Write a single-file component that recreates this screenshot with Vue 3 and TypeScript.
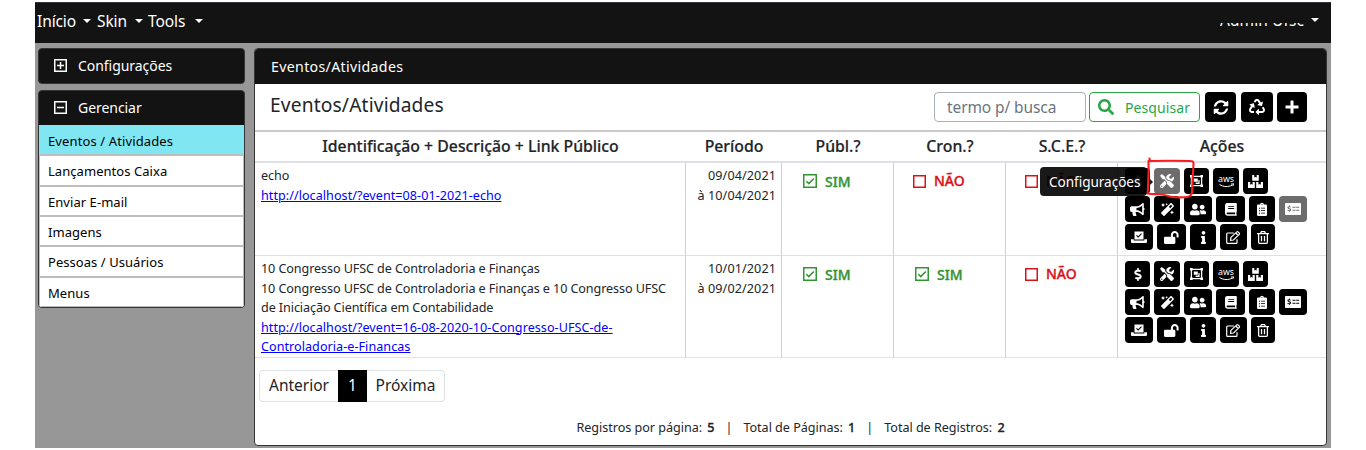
<script setup lang="ts">
interface Shape { box: string; w: number; h: number; d?: string; line?: string; sw?: number; label?: string }
interface Action { icon: string; w: number }
interface EventRow {
  cls: string
  lines: string[]
  link: string[]
  from: string
  to: string
  flags: boolean[]
}

const icons: Record<string, Shape> = {
  dollar: { box: '0 0 288 512', w: 8, h: 13, d: 'M209.2 233.4l-108-31.6C88.7 198.2 80 186.5 80 173.5c0-16.3 13.2-29.5 29.5-29.5h66.3c12.2 0 24.2 3.7 34.2 10.5 6.1 4.1 14.3 3.1 19.5-2l34.8-34c7.1-6.9 6.1-18.4-1.8-24.5C238 74.8 207.4 64.1 176 64V16c0-8.8-7.2-16-16-16h-32c-8.8 0-16 7.2-16 16v48h-2.5C45.8 64-5.4 118.7.5 183.6c4.2 46.1 39.4 83.6 83.8 96.6l102.5 30c12.5 3.7 21.2 15.3 21.2 28.3 0 16.3-13.2 29.5-29.5 29.5h-66.3C100 368 88 364.3 78 357.5c-6.1-4.1-14.3-3.1-19.5 2l-34.8 34c-7.1 6.9-6.1 18.4 1.8 24.5 24.5 19.2 55.1 29.9 86.5 30v48c0 8.8 7.2 16 16 16h32c8.8 0 16-7.2 16-16v-48.2c46.6-.9 90.3-28.6 105.7-72.7 21.5-61.6-14.6-124.8-72.5-141.7z' },
  tools: { box: '0 0 512 512', w: 14, h: 14, d: 'M501.1 395.7L384 278.6c-23.1-23.1-57.6-27.6-85.4-13.9L192 158.1V96L64 0 0 64l96 128h62.1l106.6 106.6c-13.6 27.8-9.2 62.3 13.9 85.4l117.1 117.1c14.6 14.6 38.2 14.6 52.7 0l52.7-52.7c14.5-14.6 14.5-38.2 0-52.7zM331.7 225c28.3 0 54.9 11 74.9 31l19.4 19.4c15.8-6.9 30.8-16.5 43.8-29.5 37.1-37.1 49.7-89.3 37.9-136.7-2.2-9-13.5-12.1-20.1-5.5l-74.4 74.4-67.9-11.3L334 98.9l74.4-74.4c6.6-6.6 3.4-17.9-5.7-20.2-47.4-11.7-99.6.9-136.6 37.9-28.5 28.5-41.9 66.1-41.2 103.6l82.1 82.1c8.1-1.9 16.5-2.9 24.7-2.9zm-103.9 82l-56.7-56.7L18.7 402.8c-25 25-25 65.5 0 90.5s65.5 25 90.5 0l123.6-123.6c-7.6-19.9-9.9-41.6-5-62.7zM64 472c-13.2 0-24-10.8-24-24 0-13.3 10.7-24 24-24s24 10.7 24 24c0 13.2-10.7 24-24 24z' },
  group: { box: '0 0 13 12', w: 13, h: 12, d: 'M0 0h2.6v2.6H0zM10.400 0H13v2.600h-2.600zM0 9.400h2.600V12H0zM10.400 9.400H13V12h-2.600zM3.800 3.400h4v3.400h-4zM8.400 5h1.200v4H5.600V7.500h2.800z', line: 'M1.400 1.300h10.200v9.400H1.400z', sw: 1.300 },
  aws: { box: '0 0 18 13', w: 18, h: 13, label: 'aws', line: 'M2.500 9.500c4 2.600 9 2.600 12.800.6M14 9.100l2.600-.3-.8 2.300', sw: 1 },
  boxes: { box: '0 0 15 13', w: 15, h: 13, d: 'M4.2 0h2.1v2.6l1.2-.6 1.2.6V0h2.1v5.7H4.2zM0 7h2.2v2.7l1.2-.6 1.2.6V7h2.2v6H0zM8.2 7h2.2v2.7l1.2-.6 1.2.6V7H15v6H8.2z' },
  horn: { box: '0 0 576 512', w: 14.6, h: 13, d: 'M576 240c0-23.63-12.95-44.04-32-55.12V32.01C544 23.26 537.02 0 512 0c-7.12 0-14.19 2.38-19.98 7.02l-85.03 68.03C364.28 109.19 310.66 128 256 128H64c-35.35 0-64 28.65-64 64v96c0 35.35 28.65 64 64 64h33.7c-1.39 10.48-2.18 21.14-2.18 32 0 39.77 9.26 77.35 25.56 110.94 5.19 10.69 16.52 17.06 28.4 17.06h74.28c26.05 0 41.69-29.84 25.9-50.56-16.4-21.52-26.15-48.36-26.15-77.44 0-11.11 1.62-21.79 4.41-32H256c54.66 0 108.28 18.81 150.98 52.95l85.03 68.03a32.023 32.023 0 0 0 19.98 7.02c24.92 0 32-22.78 32-32V295.13C563.05 284.04 576 263.63 576 240zm-96 141.42l-33.05-26.44C392.95 311.78 325.12 288 256 288v-96c69.12 0 136.95-23.78 190.95-66.98L480 98.58v282.84z' },
  magic: { box: '0 0 512 512', w: 13, h: 13, d: 'M224 96l16-32 32-16-32-16-16-32-16 32-32 16 32 16 16 32zM80 160l26.66-53.33L160 80l-53.34-26.67L80 0 53.34 53.33 0 80l53.34 26.67L80 160zm352 128l-26.66 53.33L352 368l53.34 26.67L432 448l26.66-53.33L512 368l-53.34-26.67L432 288zm70.62-193.77L417.77 9.38C411.53 3.12 403.34 0 395.15 0c-8.19 0-16.38 3.12-22.63 9.38L9.38 372.52c-12.5 12.5-12.5 32.76 0 45.25l84.85 84.85c6.25 6.25 14.44 9.37 22.62 9.37 8.19 0 16.38-3.12 22.63-9.37l363.14-363.15c12.5-12.48 12.5-32.75 0-45.24zM359.45 203.46l-50.91-50.91 86.6-86.6 50.91 50.91-86.6 86.6z' },
  users: { box: '0 0 640 512', w: 16.2, h: 13, d: 'M192 256c61.9 0 112-50.1 112-112S253.9 32 192 32 80 82.1 80 144s50.1 112 112 112zm76.8 32h-8.3c-20.8 10-43.9 16-68.5 16s-47.6-6-68.5-16h-8.3C51.6 288 0 339.6 0 403.2V432c0 26.5 21.5 48 48 48h288c26.5 0 48-21.5 48-48v-28.8c0-63.6-51.6-115.2-115.2-115.2zM480 256c53 0 96-43 96-96s-43-96-96-96-96 43-96 96 43 96 96 96zm48 32h-3.8c-13.9 4.8-28.6 8-44.2 8s-30.3-3.2-44.2-8H432c-20.4 0-39.2 5.9-55.7 15.4 24.4 26.3 39.7 61.2 39.7 99.8v38.4c0 2.2-.5 4.3-.6 6.4H592c26.5 0 48-21.5 48-48 0-61.9-50.1-112-112-112z' },
  book: { box: '0 0 12 13', w: 12, h: 13, d: 'M2.4 0H11q.8 0 .8.8v7.8q0 .4-.4.7v1.9q.4.2.4.6v.4q0 .5-.6.5H2.4Q0 12.7 0 10.3V2.4Q0 0 2.4 0zM3.2 3.2v.9h6v-.9zM3.2 5v.9h6V5zM2.4 9.6q-.8 0-.8.8t.8.8h7.7V9.6z' },
  clip: { box: '0 0 10 13', w: 10, h: 13, d: 'M1.2 1.6h1.9a1.9 1.9 0 0 1 3.8 0h1.9Q10 1.6 10 2.8v9Q10 13 8.8 13H1.2Q0 13 0 11.8v-9Q0 1.6 1.2 1.6zM4.5 1.2v.8h1v-.8zM2 4.8v1h1v-1zM4 4.8v.8h4v-.8zM2 7.2v1h1v-1zM4 7.2V8h4v-.8zM2 9.7v1h1v-1zM4 9.7v.8h4v-.8z' },
  check: { box: '0 0 16 12', w: 16, h: 12, d: 'M.8 0h14.4q.8 0 .8.8v10.4q0 .8-.8.8H.8q-.8 0-.8-.8V.8Q0 0 .8 0zM7.500 3.700v1h3v-1zM11.200 3.700v1H14.200v-1zM7.500 6.800v.9h3v-.9zM11.200 6.800v.9h3v-.9zM4 2.600v.7Q2.300 3.600 2.400 4.800q.1 1 1.800 1.400.8.2.7.7-.2.5-1 .4L2.700 7l-.4.8 1.700.5V9h.7v-.8q1.400-.3 1.400-1.500-.1-1-1.600-1.400-1.100-.2-1-.6.2-.5 1-.4l1 .3.300-.8-1-.3v-.9z' },
  vote: { box: '0 0 16 13', w: 16, h: 13, d: 'M3.5.6h9v8h-9zM7.2 6.8l3.7-3.7-.8-.8-2.9 2.900-1.300-1.300-.8.8zM0 8.200h2.700v1.300h10.600V8.200H16V11q0 1-1 1H1q-1 0-1-1z' },
  unlock: { box: '0 0 576 512', w: 14.6, h: 13, d: 'M423.5 0C339.5.3 272 69.5 272 153.5V224H48c-26.5 0-48 21.5-48 48v192c0 26.5 21.5 48 48 48h352c26.5 0 48-21.5 48-48V272c0-26.5-21.5-48-48-48h-48v-71.1c0-39.6 31.7-72.5 71.3-72.9 40-.4 72.7 32.1 72.7 72v80c0 13.3 10.7 24 24 24h32c13.3 0 24-10.7 24-24v-80C576 68 507.5-.3 423.5 0z' },
  info: { box: '0 0 192 512', w: 5, h: 13, d: 'M20 424.229h20V279.771H20c-11.046 0-20-8.954-20-20V212c0-11.046 8.954-20 20-20h112c11.046 0 20 8.954 20 20v212.229h20c11.046 0 20 8.954 20 20V492c0 11.046-8.954 20-20 20H20c-11.046 0-20-8.954-20-20v-47.771c0-11.046 8.954-20 20-20zM96 0C56.235 0 24 32.235 24 72s32.235 72 72 72 72-32.235 72-72S135.764 0 96 0z' },
  edit: { box: '0 0 15 13', w: 15, h: 13, line: 'M7.8 2H1.6Q.7 2 .7 2.9v8.500q0 .9.9.9h8.500q.9 0 .9-.9V8.200M4.900 6.400L10.800.9q.6-.5 1.200 0l1.300 1.300q.5.6 0 1.200L7.500 9l-2.900.4zM9.800 2l2.500 2.500', sw: 1.2 },
  trash: { box: '0 0 12 13', w: 12, h: 13, line: 'M0 2.6h12M3.6 2.4L4.4.7h3.200l.8 1.700M1.600 2.800v8.500q0 1 1 1h6.800q1 0 1-1V2.800M4.500 5v5.300M7.500 5v5.300', sw: 1.3 },
  sync: { box: '0 0 512 512', w: 16, h: 15, d: 'M370.72 133.28C339.458 104.008 298.888 87.962 255.848 88c-77.458.068-144.328 53.178-162.791 126.85-1.344 5.363-6.122 9.15-11.651 9.15H24.103c-7.498 0-13.194-6.807-11.807-14.176C33.933 94.924 134.813 8 256 8c66.448 0 126.791 26.136 171.315 68.685L463.03 40.97C478.149 25.851 504 36.559 504 57.941V192c0 13.255-10.745 24-24 24H345.941c-21.382 0-32.09-25.851-16.971-40.971l41.75-41.749zM32 296h134.059c21.382 0 32.09 25.851 16.971 40.971l-41.75 41.75c31.262 29.273 71.835 45.319 114.876 45.28 77.418-.07 144.315-53.144 162.787-126.849 1.344-5.363 6.122-9.15 11.651-9.15h57.304c7.498 0 13.194 6.807 11.807 14.176C478.067 417.076 377.187 504 256 504c-66.448 0-126.791-26.136-171.315-68.685L48.97 471.03C33.851 486.149 8 475.441 8 454.059V320c0-13.255 10.745-24 24-24z' },
  recycle: { box: '0 0 512 512', w: 16, h: 16, d: 'M184.561 261.903c3.232 13.997-12.123 24.635-24.068 17.168l-40.736-25.455-50.867 81.402C55.606 356.273 70.96 384 96.012 384H148c6.627 0 12 5.373 12 12v40c0 6.627-5.373 12-12 12H96.115c-75.334 0-121.302-83.048-81.408-146.88l50.822-81.388-40.725-25.448c-12.081-7.547-8.966-25.961 4.879-29.158l110.237-25.45c8.611-1.988 17.201 3.381 19.189 11.99l25.452 110.237zm98.561-182.915l41.289 66.076-40.74 25.457c-12.051 7.528-9 25.953 4.879 29.158l110.237 25.45c8.672 1.999 17.215-3.438 19.189-11.99l25.45-110.237c3.197-13.844-11.99-24.719-24.068-17.168l-40.687 25.424-41.263-66.082c-37.521-60.033-125.209-60.171-162.816 0l-17.963 28.766c-3.51 5.62-1.8 13.021 3.82 16.533l33.919 21.195c5.62 3.512 13.024 1.803 16.536-3.817l17.961-28.743c12.712-20.341 41.973-19.676 54.257-.022zM497.288 301.12l-27.515-44.065c-3.511-5.623-10.916-7.334-16.538-3.821l-33.861 21.159c-5.62 3.512-7.33 10.915-3.818 16.536l27.564 44.112c13.257 21.211-2.057 48.96-27.136 48.96H320V336.02c0-14.213-17.242-21.383-27.313-11.313l-80 79.981c-6.249 6.248-6.249 16.379 0 22.627l80 79.989C302.689 517.308 320 510.3 320 495.989V448h95.88c75.274 0 121.335-82.997 81.408-146.88z' },
  plus: { box: '0 0 14 14', w: 14, h: 14, d: 'M6 .5h2q.5 0 .5.5v4.500H13q.5 0 .5.500v2q0 .5-.5.500H8.500V13q0 .5-.5.500H6q-.5 0-.5-.5V8.500H1Q.5 8.500.5 8V6q0-.5.500-.5h4.500V1q0-.5.500-.5z' },
  search: { box: '0 0 512 512', w: 16, h: 16, d: 'M505 442.7L405.3 343c-4.5-4.5-10.6-7-17-7H372c27.6-35.3 44-79.7 44-128C416 93.1 322.9 0 208 0S0 93.1 0 208s93.1 208 208 208c48.3 0 92.7-16.4 128-44v16.3c0 6.4 2.5 12.5 7 17l99.7 99.7c9.4 9.4 24.6 9.4 33.9 0l28.3-28.3c9.4-9.4 9.4-24.6.1-34zM208 336c-70.7 0-128-57.2-128-128 0-70.7 57.2-128 128-128 70.7 0 128 57.2 128 128 0 70.7-57.2 128-128 128z' },
}

const actionRows: Action[][] = [
  [{ icon: 'dollar', w: 25 }, { icon: 'tools', w: 26 }, { icon: 'group', w: 25 }, { icon: 'aws', w: 26 }, { icon: 'boxes', w: 25 }],
  [{ icon: 'horn', w: 25 }, { icon: 'magic', w: 26 }, { icon: 'users', w: 28 }, { icon: 'book', w: 29 }, { icon: 'clip', w: 26 }, { icon: 'check', w: 28 }],
  [{ icon: 'vote', w: 28 }, { icon: 'unlock', w: 29 }, { icon: 'info', w: 26 }, { icon: 'edit', w: 27 }, { icon: 'trash', w: 24 }],
]

const toolbar = ['sync', 'recycle', 'plus']
const menus = ['Início', 'Skin', 'Tools']
const links = ['Eventos / Atividades', 'Lançamentos Caixa', 'Enviar E-mail', 'Imagens', 'Pessoas / Usuários', 'Menus']
const heads = ['Identificação + Descrição + Link Público', 'Período', 'Públ.?', 'Cron.?', 'S.C.E.?', 'Ações']

const rows: EventRow[] = [
  {
    cls: 'first',
    lines: ['echo'],
    link: ['http://localhost/?event=08-01-2021-echo'],
    from: '09/04/2021',
    to: 'à 10/04/2021',
    flags: [true, false, false],
  },
  {
    cls: 'second',
    lines: [
      '10 Congresso UFSC de Controladoria e Finanças',
      '10 Congresso UFSC de Controladoria e Finanças e 10 Congresso UFSC',
      'de Iniciação Científica em Contabilidade',
    ],
    link: ['http://localhost/?event=16-08-2020-10-Congresso-UFSC-de-', 'Controladoria-e-Financas'],
    from: '10/01/2021',
    to: 'à 09/02/2021',
    flags: [true, true, false],
  },
]

const isMuted = (row: number, icon: string) => row === 0 && (icon === 'tools' || icon === 'check')
</script>

<template>
  <div class="app">
    <nav class="nav">
      <span v-for="m in menus" :key="m" :class="['menu', 'm-' + m.length]">{{ m }}<i class="caret"></i></span>
      <span class="account"><span class="account-name"><span>Admin Ufsc</span></span><i class="caret"></i></span>
    </nav>

    <div class="body">
      <aside class="side">
        <section class="box">
          <header class="box-head">
            <svg width="13" height="13" viewBox="0 0 13 13"><path d="M.75.75h11.500v11.500H.75zM6.500 3v7M3 6.500h7" /></svg>
            <span>Configurações</span>
          </header>
        </section>
        <section class="box">
          <header class="box-head">
            <svg width="13" height="13" viewBox="0 0 13 13"><path d="M.75.75h11.500v11.500H.75zM3 6.500h7" /></svg>
            <span>Gerenciar</span>
          </header>
          <ul class="list">
            <li v-for="(l, i) in links" :key="l" :class="{ active: i === 0 }">{{ l }}</li>
          </ul>
        </section>
      </aside>

      <main class="main">
        <header class="main-head">Eventos/Atividades</header>
        <div class="bar">
          <h1>Eventos/Atividades</h1>
          <input class="field" type="text" placeholder="termo p/ busca" />
          <button class="search">
            <svg width="16" height="16" :viewBox="icons.search.box"><path :d="icons.search.d" /></svg>
            <span>Pesquisar</span>
          </button>
          <button v-for="t in toolbar" :key="t" :class="['tool', t]">
            <svg :width="icons[t].w" :height="icons[t].h" :viewBox="icons[t].box"><path :d="icons[t].d" /></svg>
          </button>
        </div>

        <table>
          <colgroup><col class="c1" /><col class="c2" /><col class="c3" /><col class="c3" /><col class="c3" /><col /></colgroup>
          <thead>
            <tr><th v-for="h in heads" :key="h"><span>{{ h }}</span></th></tr>
          </thead>
          <tbody>
            <tr v-for="(r, ri) in rows" :key="r.cls" :class="r.cls">
              <td class="desc">
                <div v-for="t in r.lines" :key="t">{{ t }}</div>
                <a v-for="t in r.link" :key="t">{{ t }}</a>
              </td>
              <td class="dates"><div>{{ r.from }}</div><div>{{ r.to }}</div></td>
              <td v-for="(f, fi) in r.flags" :key="fi" class="flag">
                <div :class="f ? 'yes' : 'no'">
                  <svg v-if="f" width="14" height="14" viewBox="0 0 14 14"><path d="M.75.75h12.500v12.500H.75zM3.300 7.200l2.500 2.400L10.800 4.500" /></svg>
                  <svg v-else width="13" height="13" viewBox="0 0 13 13"><path d="M.75.75h11.500v11.500H.75z" /></svg>
                  <span>{{ f ? 'SIM' : 'NÃO' }}</span>
                </div>
              </td>
              <td class="actions">
                <div v-for="(ar, ai) in actionRows" :key="ai" class="action-row">
                  <button v-for="a in ar" :key="a.icon" :class="{ muted: isMuted(ri, a.icon) }" :style="{ width: a.w + 'px' }">
                    <svg :width="icons[a.icon].w" :height="icons[a.icon].h" :viewBox="icons[a.icon].box">
                      <text v-if="icons[a.icon].label" x="1" y="6.500" textLength="16" lengthAdjust="spacingAndGlyphs">{{ icons[a.icon].label }}</text>
                      <path v-if="icons[a.icon].d" fill-rule="evenodd" :d="icons[a.icon].d" />
                      <path v-if="icons[a.icon].line" class="line" :d="icons[a.icon].line" :stroke-width="icons[a.icon].sw" />
                    </svg>
                  </button>
                </div>
                <template v-if="ri === 0">
                  <div class="tip">Configurações</div>
                  <svg class="marker" width="50" height="44" viewBox="0 0 50 44">
                    <path d="M4.500 1.500L5 4M3.500 5.500q0 3 .2 7-.5 12-1 24M2.500 36.500q6 1 11.500.5 6 1 11 2.500 8 1.500 17 .5 4-.5 5-4.500.5-14 1.500-28 .5-3.500-3-3.500-20-.5-42 0" />
                  </svg>
                </template>
              </td>
            </tr>
          </tbody>
        </table>

        <div class="pager"><span class="prev">Anterior</span><span class="current">1</span><span class="next">Próxima</span></div>
        <footer>
          <span>Registros por página: <b>5</b></span><i>|</i><span>Total de Páginas: <b>1</b></span><i>|</i><span>Total de Registros: <b>2</b></span>
        </footer>
      </main>
    </div>
  </div>
</template>

<style>
body { margin: 0; background: #fff; overflow: hidden; }
</style>

<style scoped>
* { box-sizing: border-box; }
.app { width: 1296px; height: 446px; margin: 2px 0 0 35px; background: #979797; font-family: "Noto Sans", sans-serif; color: #212529; overflow: hidden; }
.nav { height: 41px; background: #131313; border-top: 1px solid #34343c; display: flex; align-items: center; padding: 0 12px 4px 2px; color: #fff; font-size: 15.5px; letter-spacing: -0.1px; white-space: nowrap; }
.menu { display: flex; align-items: center; justify-content: space-between; width: 60px; padding-right: 6px; }
.menu.m-4 { width: 51px; padding-right: 5px; }
.menu.m-5 { width: 55px; padding-right: 0; }
.caret { width: 0; height: 0; border: 4px solid transparent; border-top-color: #fff; border-bottom: 0; }
.account { margin-left: auto; display: flex; align-items: center; gap: 7px; padding-bottom: 3px; letter-spacing: 0.1px; }
.account-name { display: flex; align-items: flex-end; height: 3px; overflow: hidden; margin-top: 9px; }
.account-name span { line-height: 12px; }
.body { display: flex; gap: 9px; padding: 5px 4px 0 3px; }
.side { width: 207px; display: flex; flex-direction: column; gap: 6px; }
.box { border: 1px solid #343434; border-radius: 4px; background: #131313; overflow: hidden; }
.box-head { height: 34px; display: flex; align-items: center; gap: 11px; padding: 0 0 2px 15px; color: #fff; font-size: 14px; letter-spacing: -0.05px; }
.box-head svg { fill: none; stroke: #fff; stroke-width: 1.5; }
.list { margin: 0; padding: 0; list-style: none; background: #bdbdbd; }
.list li { height: 30.33px; border: 1px solid #bdbdbd; background: #fff; color: #000; padding: 1px 0 0 8px; font-size: 13px; line-height: 28px; letter-spacing: 0.05px; }
.list li.active { background: #80e7f2; border-color: #80e7f2 #80e7f2 #bdbdbd; letter-spacing: 0.12px; }
.main { width: 1073px; height: 398px; border: 1px solid #343434; border-radius: 4px; background: #fff; overflow: hidden; }
.main-head { height: 35px; background: #131313; color: #fff; padding-left: 16px; font-size: 14.2px; line-height: 35px; letter-spacing: 0.32px; }
.bar { height: 48px; border-bottom: 2px solid #cdc9cb; display: flex; align-items: center; padding: 0 19px 0 15px; }
h1 { margin: 0 auto 5px 0; font-size: 19.2px; font-weight: 400; letter-spacing: 0.15px; }
.field { width: 152px; height: 30px; border: 1px solid #a9b1b4; border-radius: 4px; padding: 0 12px; font: 15.5px "Noto Sans", sans-serif; letter-spacing: -0.1px; }
.field::placeholder { color: #6c757d; }
.search { width: 111px; height: 30px; margin: 0 5px 0 3px; border: 1px solid #28a745; border-radius: 4px; background: #fff; color: #28a745; display: flex; align-items: center; gap: 11px; padding: 0 0 0 8px; font: 14px "Noto Sans", sans-serif; letter-spacing: 0.1px; }
.search path { fill: #28a745; }
.tool { height: 30px; width: 32px; margin-right: 4px; }
.tool.sync { width: 31px; margin-right: 5px; }
.tool.plus { width: 30px; margin-right: 0; }
.tool, .actions button { display: flex; align-items: center; justify-content: center; border: 0; padding: 0; border-radius: 4px; background: #000; }
.tool path, .actions button path { fill: #fff; }
.actions button .line { fill: none; stroke: #fff; }
table { width: 1071px; table-layout: fixed; border-collapse: separate; border-spacing: 0; }
.c1 { width: 431px; }
.c2 { width: 96px; }
.c3 { width: 112px; }
th { height: 31px; padding: 0; border-bottom: 2px solid #dee2e6; font-size: 15.8px; font-weight: 500; line-height: 27px; letter-spacing: 0; white-space: nowrap; -webkit-text-stroke: 0.2px currentColor; }
td { padding: 0; vertical-align: top; border-bottom: 1px solid #dee2e6; border-right: 1px solid #ced0d2; }
td:last-child { border-right: 0; }
.first td { height: 93px; }
.second td { height: 102px; }
.desc, .dates { font-size: 12.6px; line-height: 19.5px; white-space: nowrap; letter-spacing: -0.09px; }
.desc { padding: 3px 0 0 6px; }
.desc a { display: table; color: #00f; text-decoration: underline; letter-spacing: 0.04px; }
.dates { padding: 3px 5px 0 0; text-align: right; letter-spacing: 0.1px; }
.flag > div { display: flex; align-items: center; gap: 8px; height: 20px; margin: 8px 0 0 20px; font-size: 14px; font-weight: 500; -webkit-text-stroke: 0.35px currentColor; }
.flag svg { fill: none; stroke: currentColor; stroke-width: 1.5; }
.flag .yes { color: #2f952f; margin-left: 21px; }
.flag .no { color: #d9121a; margin-left: 19px; }
.flag .no span { padding-bottom: 1px; }
.actions { position: relative; padding: 5px 0 0 7px; }
.action-row { display: flex; gap: 4px; margin-bottom: 2px; }
.actions button { height: 26px; }
.actions button.muted { background: #6c6c6c; }
.actions svg { flex: none; overflow: visible; }
.actions text { fill: #fff; font: 9.5px "Noto Sans", sans-serif; }
.tip { position: absolute; left: -78px; top: 4px; width: 107px; height: 29px; border-radius: 4px; background: rgba(0, 0, 0, .9); color: #fff; font-size: 13.6px; line-height: 30px; padding-left: 9px; letter-spacing: -0.05px; }
.tip::after { content: ""; position: absolute; left: 107px; top: 9px; border: 6px solid transparent; border-left-color: rgba(0, 0, 0, .9); border-right: 0; }
.marker { position: absolute; left: 27px; top: -6px; fill: none; stroke: #fb1d1d; stroke-width: 2.1; stroke-linecap: round; }
.pager { display: flex; width: 186px; height: 32px; margin: 12px 0 0 4px; border: 1px solid #dee2e6; border-radius: 4px; font-size: 15.5px; line-height: 28px; }
.pager span { text-align: center; }
.prev { width: 78px; }
.current { width: 29px; margin: -1px 0; padding-top: 1px; background: #000; color: #fff; }
.next { flex: 1; }
footer { display: flex; justify-content: center; margin-top: 16px; font-size: 12.6px; line-height: 20px; white-space: pre; letter-spacing: -0.03px; }
footer b { font-weight: 500; padding-left: 2px; -webkit-text-stroke: 0.3px currentColor; }
footer i { font-style: normal; padding: 0 11px; }
</style>
